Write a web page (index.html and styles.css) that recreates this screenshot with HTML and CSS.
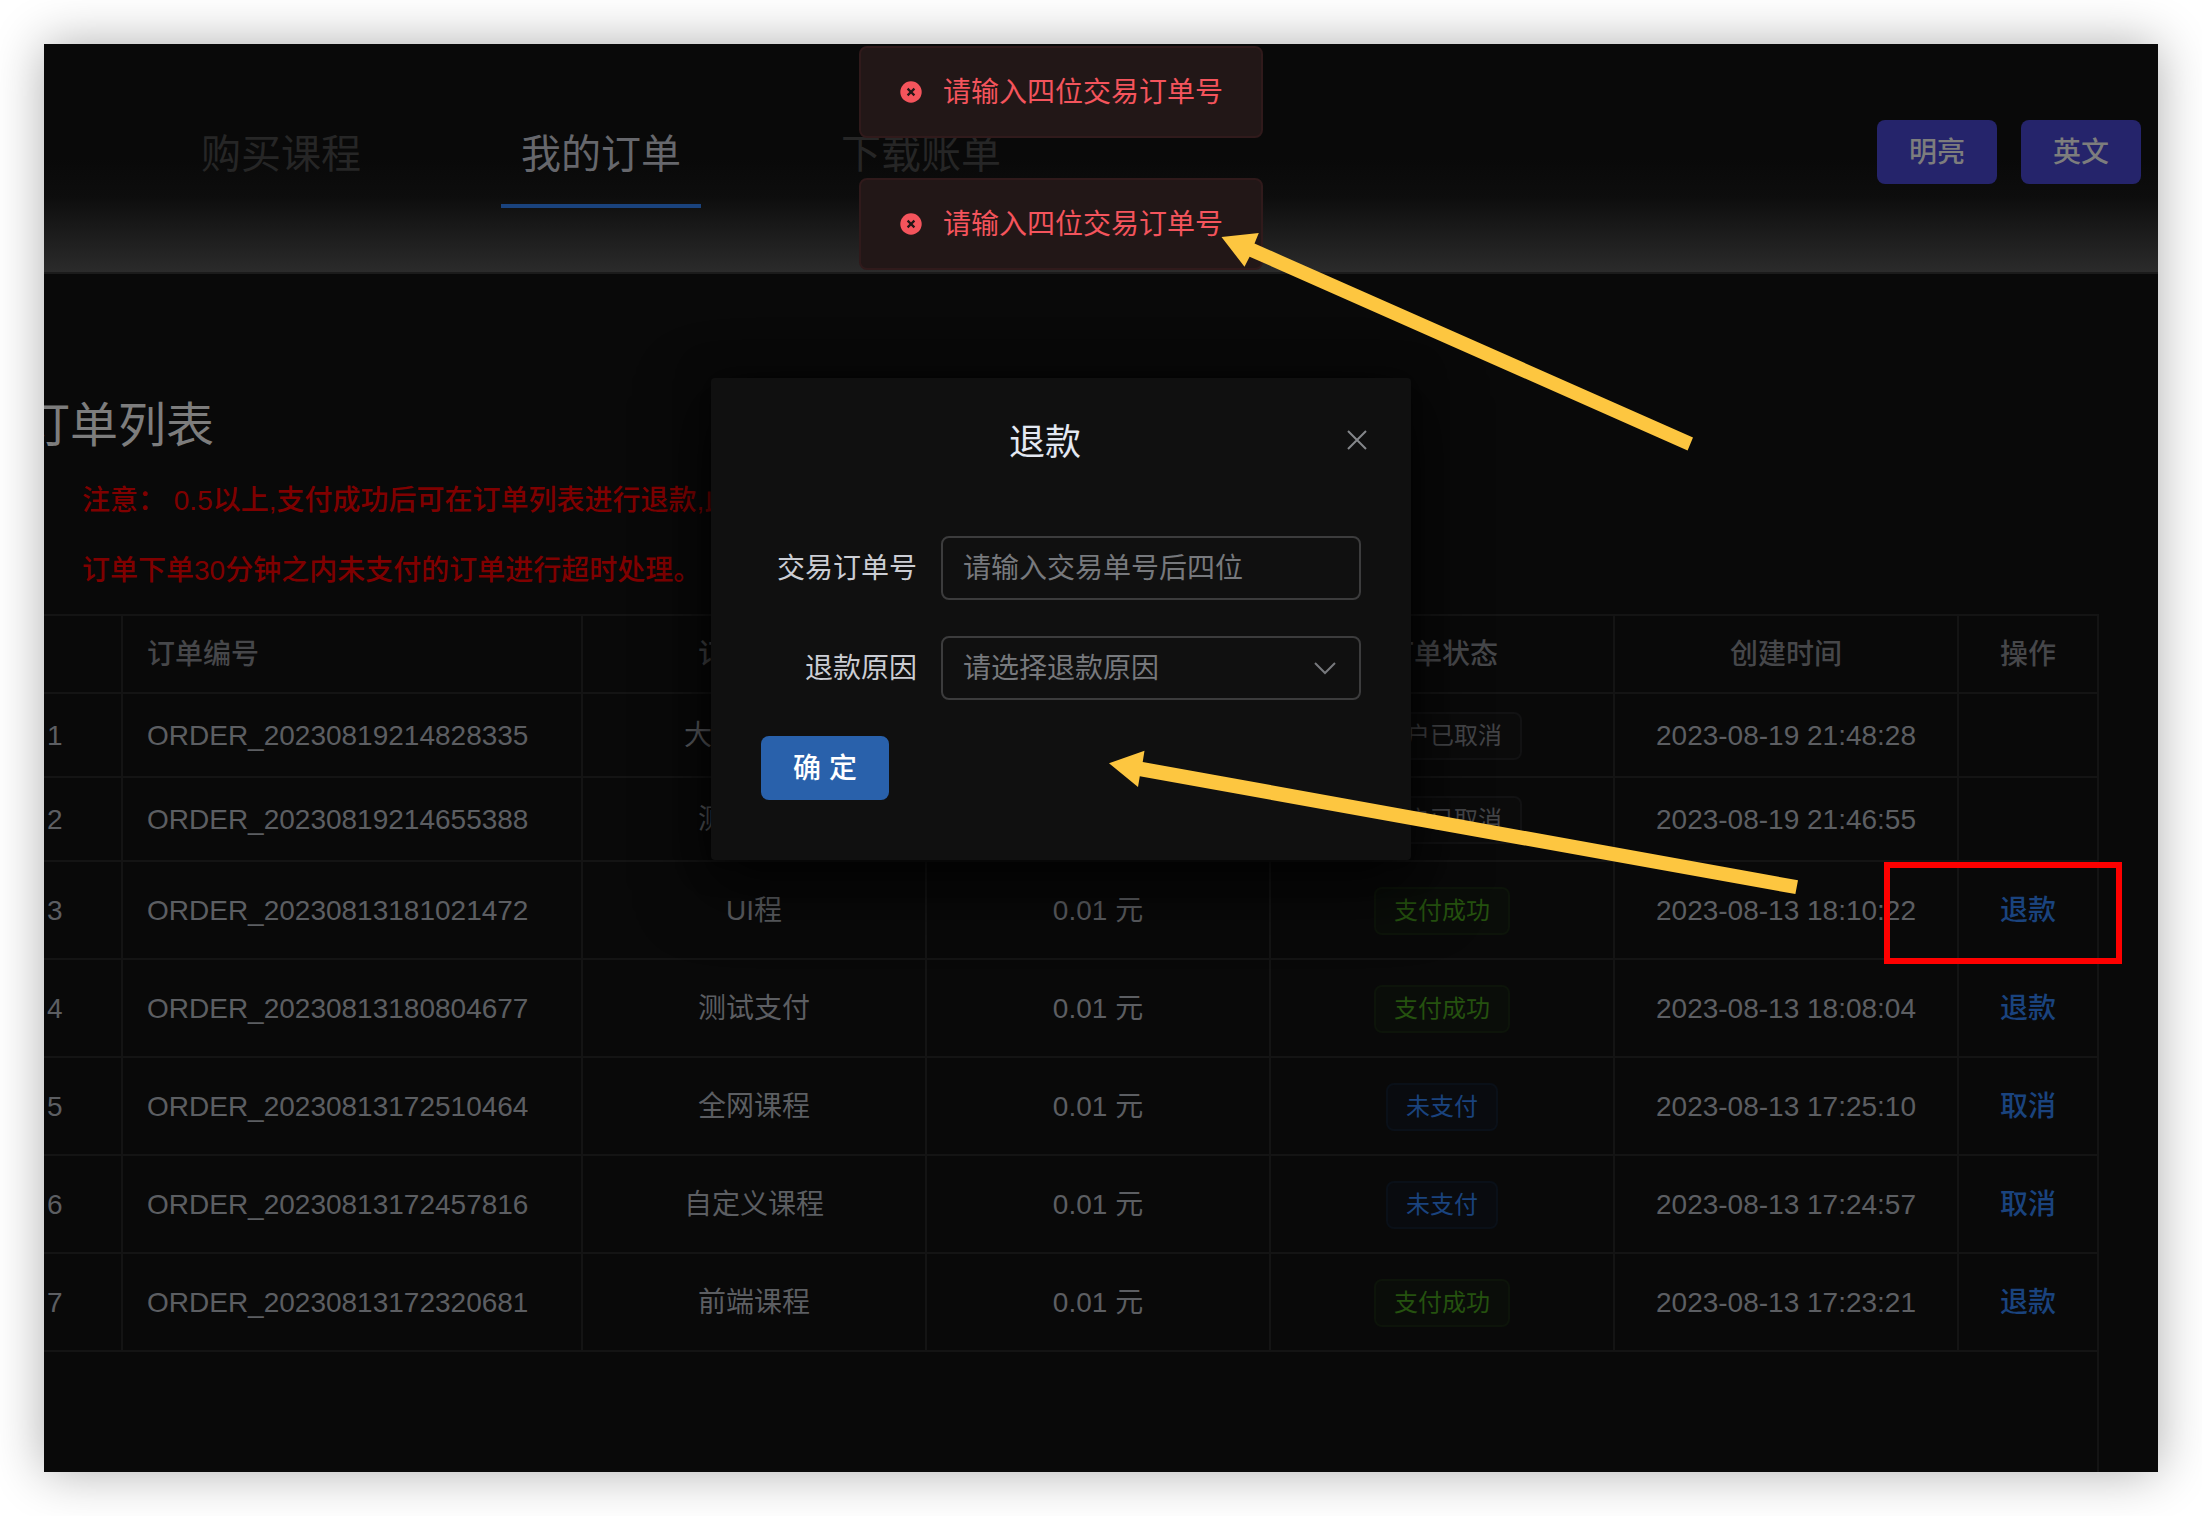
FILE: index.html
```html
<!DOCTYPE html>
<html lang="zh-CN">
<head>
  <meta charset="utf-8">
  <title>我的订单</title>
  <link rel="stylesheet" href="styles.css">
</head>
<body>
  <div class="window">
    <header class="header">
      <nav class="tabs">
        <a class="tab" href="#buy">购买课程</a>
        <a class="tab tab--active" href="#orders">我的订单</a>
        <a class="tab" href="#bill">下载账单</a>
      </nav>
      <div class="header-actions">
        <button class="header-button" type="button">明亮</button>
        <button class="header-button" type="button">英文</button>
      </div>
    </header>

    <main class="orders">
      <h1 class="orders-title">订单列表</h1>
      <div class="notice">
        <p>注意： 0.5以上,支付成功后可在订单列表进行退款,此</p>
        <p>订单下单30分钟之内未支付的订单进行超时处理。</p>
      </div>
      <div class="table-wrap">
        <table class="table">
          <colgroup>
            <col class="col-index"><col class="col-number"><col><col><col><col><col class="col-action">
          </colgroup>
          <thead>
            <tr><th></th><th class="left">订单编号</th><th>订单名称</th><th>订单金额</th><th>订单状态</th><th>创建时间</th><th>操作</th></tr>
          </thead>
          <tbody>
            <tr><td class="left">1</td><td class="left">ORDER_20230819214828335</td><td>大前端课程</td><td>0.01 元</td><td><span class="tag">用户已取消</span></td><td>2023-08-19 21:48:28</td><td></td></tr>
            <tr><td class="left">2</td><td class="left">ORDER_20230819214655388</td><td>测试支付</td><td>0.01 元</td><td><span class="tag">用户已取消</span></td><td>2023-08-19 21:46:55</td><td></td></tr>
            <tr class="tall"><td class="left">3</td><td class="left">ORDER_20230813181021472</td><td>UI程</td><td>0.01 元</td><td><span class="tag tag--success">支付成功</span></td><td>2023-08-13 18:10:22</td><td><button class="link" type="button">退款</button></td></tr>
            <tr class="tall"><td class="left">4</td><td class="left">ORDER_20230813180804677</td><td>测试支付</td><td>0.01 元</td><td><span class="tag tag--success">支付成功</span></td><td>2023-08-13 18:08:04</td><td><button class="link" type="button">退款</button></td></tr>
            <tr class="tall"><td class="left">5</td><td class="left">ORDER_20230813172510464</td><td>全网课程</td><td>0.01 元</td><td><span class="tag tag--primary">未支付</span></td><td>2023-08-13 17:25:10</td><td><button class="link" type="button">取消</button></td></tr>
            <tr class="tall"><td class="left">6</td><td class="left">ORDER_20230813172457816</td><td>自定义课程</td><td>0.01 元</td><td><span class="tag tag--primary">未支付</span></td><td>2023-08-13 17:24:57</td><td><button class="link" type="button">取消</button></td></tr>
            <tr class="tall"><td class="left">7</td><td class="left">ORDER_20230813172320681</td><td>前端课程</td><td>0.01 元</td><td><span class="tag tag--success">支付成功</span></td><td>2023-08-13 17:23:21</td><td><button class="link" type="button">退款</button></td></tr>
          </tbody>
        </table>
      </div>
    </main>

    <div class="overlay overlay--dialog">
      <section class="dialog" role="dialog" aria-labelledby="dialog-title">
        <div class="dialog-header">
          <h2 class="dialog-title" id="dialog-title">退款</h2>
          <button class="dialog-close" type="button" aria-label="关闭">
            <svg width="20" height="20" viewBox="0 0 20 20" fill="none" stroke="currentColor" stroke-width="2"><path d="M1 1 19 19M19 1 1 19"/></svg>
          </button>
        </div>
        <form class="form">
          <div class="form-row">
            <label class="form-label" for="trade-no">交易订单号</label>
            <input class="field" id="trade-no" type="text" placeholder="请输入交易单号后四位">
          </div>
          <div class="form-row">
            <label class="form-label" for="reason">退款原因</label>
            <div class="select-box">
              <select class="field" id="reason"><option>请选择退款原因</option></select>
              <svg class="select-arrow" width="22" height="14" viewBox="0 0 22 14" fill="none" stroke="currentColor" stroke-width="2"><path d="M1 2 11 12 21 2"/></svg>
            </div>
          </div>
          <button class="submit" type="button">确 定</button>
        </form>
      </section>
    </div>

    <div class="overlay overlay--messages">
      <div class="message" role="alert">
        <svg class="message-icon" width="24" height="24" viewBox="0 0 24 24"><circle cx="12" cy="12" r="10.7" fill="#f4545c"/><path d="M8.6 8.6 15.4 15.4M15.4 8.6 8.6 15.4" stroke="#221717" stroke-width="2.2"/></svg>
        <span>请输入四位交易订单号</span>
      </div>
      <div class="message" role="alert">
        <svg class="message-icon" width="24" height="24" viewBox="0 0 24 24"><circle cx="12" cy="12" r="10.7" fill="#f4545c"/><path d="M8.6 8.6 15.4 15.4M15.4 8.6 8.6 15.4" stroke="#221717" stroke-width="2.2"/></svg>
        <span>请输入四位交易订单号</span>
      </div>
    </div>
  </div>

  <svg class="annotations" width="2202" height="1516" viewBox="0 0 2202 1516" aria-hidden="true">
    <path fill="#fdc640" d="M1221.5 237 1258.8 233 1254.5 243.5 1693 437.5 1687.6 450.5 1249.6 256.7 1244.5 266.7Z"/>
    <path fill="#fdc640" d="M1109 763.3 1144.5 750.7 1142.7 762 1798 880.3 1795.4 894 1139.8 776.3 1138 787Z"/>
    <rect x="1887" y="865" width="232" height="96" fill="none" stroke="#fe0000" stroke-width="6"/>
  </svg>
</body>
</html>
```

FILE: styles.css
```css
* {
  box-sizing: border-box;
}

body {
  position: relative;
  display: flex;
  min-height: 100vh;
  margin: 0;
  padding: 44px;
  background: #fff;
  color: #5c5e62;
  font: 28px/40px "Liberation Sans", "Noto Sans CJK SC", sans-serif;
  overflow-x: hidden;
}

button,
input,
select {
  font: inherit;
}

h1,
h2,
p {
  margin: 0;
  font-weight: 400;
}

.window {
  position: relative;
  display: flex;
  flex: 1;
  flex-direction: column;
  min-width: 0;
  background: #090909;
  box-shadow: 0 0 48px rgba(0, 0, 0, 0.32);
}

/* Header */
.header {
  display: flex;
  justify-content: space-between;
  align-items: flex-start;
  height: 230px;
  padding: 76px 17px 0 137px;
  border-bottom: 2px solid #1b1b1b;
  background: linear-gradient(#090909 50%, #0d0d0d 67%, #2b2b2b);
}

.tabs {
  display: flex;
  gap: 120px;
}

.tab {
  width: 200px;
  padding-bottom: 16px;
  border-bottom: 4px solid transparent;
  color: #262626;
  font-size: 40px;
  line-height: 68px;
  text-align: center;
  text-decoration: none;
}

.tab--active {
  border-color: #1a437e;
  color: #66676c;
}

.header-actions {
  display: flex;
  gap: 24px;
}

.header-button {
  width: 120px;
  height: 64px;
  padding: 2px 0 0;
  border: 0;
  border-radius: 8px;
  background: #25246b;
  color: #7d7d7d;
  font-weight: 500;
}

/* Order list */
.orders {
  display: flex;
  flex: 1;
  flex-direction: column;
  padding-top: 120px;
  overflow: hidden;
}

.orders-title {
  margin: 0 0 8px -22px;
  color: #7d7d7d;
  font-size: 48px;
  line-height: 64px;
}

.notice {
  margin: 0 0 8px 38px;
  color: #7f0000;
  font-weight: 500;
  line-height: 70px;
  white-space: nowrap;
}

.notice p {
  font-weight: inherit;
}

.table-wrap {
  flex: 1;
  margin: 0 59px 0 -21px;
  border-top: 2px solid #141414;
  border-right: 2px solid #141414;
}

.table {
  width: 100%;
  table-layout: fixed;
  border-spacing: 0;
}

.col-index {
  width: 100px;
}

.col-number {
  width: 460px;
}

.col-action {
  width: 138px;
}

.table th,
.table td {
  height: 84px;
  padding: 2px 24px 0;
  border-right: 2px solid #141414;
  border-bottom: 2px solid #141414;
  text-align: center;
  white-space: nowrap;
}

.table th {
  height: 78px;
  color: #46474a;
  font-weight: 500;
}

.table .tall td {
  height: 98px;
}

.table .left {
  text-align: left;
}

.table th:last-child,
.table td:last-child {
  border-right: 0;
}

.tag {
  display: inline-block;
  padding: 0 18px;
  border: 2px solid #121213;
  border-radius: 8px;
  background: #0b0b0b;
  color: #434447;
  font-size: 24px;
  line-height: 44px;
  vertical-align: middle;
}

.tag--success {
  border-color: #0d140a;
  background: #0a0d09;
  color: #25520f;
}

.tag--primary {
  border-color: #0a1018;
  background: #090b0f;
  color: #1a437e;
}

.link {
  padding: 0;
  border: 0;
  background: none;
  color: #1a437e;
  font-weight: 500;
}

/* Layers above the page; both are centred on the same axis */
.overlay {
  position: absolute;
  top: 0;
  right: 80px;
  left: 0;
  display: flex;
  flex-direction: column;
  align-items: center;
}

.overlay--dialog {
  padding-top: 334px;
}

.overlay--messages {
  gap: 40px;
  padding-top: 2px;
}

.dialog {
  width: 700px;
  padding: 32px 50px 60px;
  border-radius: 4px;
  background: #101010;
  box-shadow: 0 24px 64px 8px rgba(0, 0, 0, 0.6), 0 0 32px rgba(0, 0, 0, 0.5);
}

.dialog-header {
  display: flex;
  align-items: center;
  height: 64px;
}

.dialog-title {
  flex: 1;
  padding: 2px 0 0 32px;
  color: #e3e8f2;
  font-size: 36px;
  text-align: center;
}

.dialog-close {
  display: flex;
  margin-right: -6px;
  padding: 0;
  border: 12px solid transparent;
  border-width: 12px 0 16px 50px;
  background: none;
  color: #85878b;
}

.form {
  display: flex;
  flex-direction: column;
  gap: 36px;
  padding-top: 62px;
}

.form-row {
  display: flex;
  align-items: center;
  gap: 24px;
}

.form-label {
  width: 156px;
  padding-top: 2px;
  color: #cbcdd4;
  text-align: right;
}

.field {
  display: block;
  width: 420px;
  height: 64px;
  padding: 2px 20px 0;
  border: 2px solid #3c3c3d;
  border-radius: 8px;
  outline: 0;
  appearance: none;
  background: #101010;
  color: #77797d;
}

.field::placeholder {
  color: #77797d;
  opacity: 1;
}

.select-box {
  position: relative;
}

.select-arrow {
  position: absolute;
  top: 25px;
  right: 25px;
  color: #77797d;
  pointer-events: none;
}

.submit {
  width: 128px;
  height: 64px;
  padding: 2px 0 0;
  border: 0;
  border-radius: 8px;
  background: #2961ab;
  color: #fff;
  font-weight: 500;
}

.message {
  display: flex;
  align-items: center;
  gap: 20px;
  width: 404px;
  height: 92px;
  padding-left: 38px;
  border: 2px solid #301a1b;
  border-radius: 8px;
  background: #221717;
  color: #f4545c;
}

.message span {
  padding-top: 2px;
}

.annotations {
  position: absolute;
  top: 0;
  left: 0;
  pointer-events: none;
}
```
